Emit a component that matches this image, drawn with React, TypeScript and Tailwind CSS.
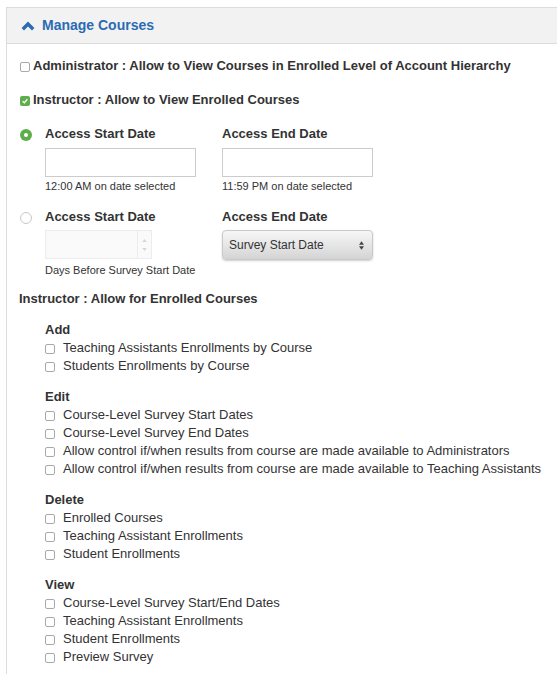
import { useState } from 'react'

const sections = [
  { title: 'Add', items: ['Teaching Assistants Enrollments by Course', 'Students Enrollments by Course'] },
  {
    title: 'Edit',
    items: [
      'Course-Level Survey Start Dates',
      'Course-Level Survey End Dates',
      'Allow control if/when results from course are made available to Administrators',
      'Allow control if/when results from course are made available to Teaching Assistants',
    ],
  },
  { title: 'Delete', items: ['Enrolled Courses', 'Teaching Assistant Enrollments', 'Student Enrollments'] },
  {
    title: 'View',
    items: ['Course-Level Survey Start/End Dates', 'Teaching Assistant Enrollments', 'Student Enrollments', 'Preview Survey'],
  },
]

function Box({ checked = false }: { checked?: boolean }) {
  if (checked) {
    return (
      <span className="flex h-[10px] w-[10px] shrink-0 items-center justify-center rounded-[2px] bg-[#5fae4c]">
        <svg viewBox="0 0 10 10" className="h-[8px] w-[8px]">
          <path d="M2 5.2 L4.2 7.2 L8 2.8" fill="none" stroke="#fff" strokeWidth="1.6" />
        </svg>
      </span>
    )
  }
  return <span className="block h-[10px] w-[10px] shrink-0 rounded-[2px] border border-[#a9a9a9] bg-white" />
}

function Radio({ checked = false }: { checked?: boolean }) {
  if (checked) {
    return (
      <span className="flex h-[12px] w-[12px] items-center justify-center rounded-full bg-[#5fae4c]">
        <span className="block h-[4px] w-[4px] rounded-full bg-white" />
      </span>
    )
  }
  return <span className="block h-[12px] w-[12px] rounded-full border border-[#c8c8c8] bg-white" />
}

export default function App() {
  const [mode] = useState(0)

  return (
    <div className="min-h-[674px] bg-white pl-[6px] pt-[7px] font-['Liberation_Sans',Arial,sans-serif] text-[#333]">
      <div className="min-h-[667px] border-l border-t border-[#dcdcdc]">
        {/* header */}
        <div className="flex h-[36px] items-center gap-[7px] border-b border-[#dcdcdc] bg-[#f2f2f2] pl-[14px]">
          <svg viewBox="0 0 14 10" className="h-[10px] w-[14px]">
            <path d="M1.8 8.2 L7 3 L12.2 8.2" fill="none" stroke="#2a6bb3" strokeWidth="3.4" />
          </svg>
          <span className="text-[14px] font-bold text-[#2a6bb3]">Manage Courses</span>
        </div>

        <div className="pl-[12px] pt-[13px]">
          <label className="flex h-[18px] items-center gap-[3px] text-[13px] font-bold leading-[18px]">
            <span className="ml-[1px] flex pt-[2px]"><Box /></span>
            Administrator : Allow to View Courses in Enrolled Level of Account Hierarchy
          </label>
          <label className="mt-[16px] flex h-[18px] items-center gap-[3px] text-[13px] font-bold leading-[18px]">
            <span className="ml-[1px] flex pt-[2px]"><Box checked /></span>
            Instructor : Allow to View Enrolled Courses
          </label>

          {/* date range: fixed */}
          <div className="mt-[16px] flex">
            <div className="flex h-[18px] w-[26px] items-center pl-[1px] pt-[2px]">
              <Radio checked={mode === 0} />
            </div>
            <div className="grid grid-cols-[151px_151px] gap-x-[26px]">
              <div>
                <div className="text-[13px] font-bold leading-[18px]">Access Start Date</div>
                <div className="mt-[5px] h-[29px] border border-[#ccc] bg-white" />
                <div className="mt-[2px] text-[11px] leading-[14px]">12:00 AM on date selected</div>
              </div>
              <div>
                <div className="text-[13px] font-bold leading-[18px]">Access End Date</div>
                <div className="mt-[5px] h-[29px] border border-[#ccc] bg-white" />
                <div className="mt-[2px] text-[11px] leading-[14px]">11:59 PM on date selected</div>
              </div>
            </div>
          </div>

          {/* date range: relative */}
          <div className="mt-[15px] flex">
            <div className="flex h-[18px] w-[26px] items-center pl-[1px] pt-[2px]">
              <Radio checked={mode === 1} />
            </div>
            <div className="grid grid-cols-[151px_151px] gap-x-[26px]">
              <div>
                <div className="text-[13px] font-bold leading-[18px]">Access Start Date</div>
                <div className="mt-[4px] flex h-[29px] w-[107px] border border-[#ececec] bg-[#fafafa]">
                  <div className="flex-1" />
                  <div className="flex w-[14px] flex-col items-center justify-center gap-[6px] border-l border-[#ececec]">
                    <svg viewBox="0 0 6 4" className="h-[3px] w-[5px]"><path d="M0 4 L3 0 L6 4Z" fill="#d6d6d6" /></svg>
                    <svg viewBox="0 0 6 4" className="h-[3px] w-[5px]"><path d="M0 0 L3 4 L6 0Z" fill="#d6d6d6" /></svg>
                  </div>
                </div>
                <div className="mt-[4px] whitespace-nowrap text-[11px] leading-[14px]">Days Before Survey Start Date</div>
              </div>
              <div>
                <div className="text-[13px] font-bold leading-[18px]">Access End Date</div>
                <div className="mt-[4px] flex h-[30px] items-center justify-between rounded-[4px] border border-[#c9c9c9] bg-gradient-to-b from-[#f6f6f6] via-[#e6e6e6] to-[#d4d4d4] pl-[6px] pr-[8px] text-[12px] text-[#333] shadow-[0_1px_2px_rgba(0,0,0,0.2)]">
                  Survey Start Date
                  <svg viewBox="0 0 6 10" className="h-[9px] w-[5px]">
                    <path d="M0 4 L3 0 L6 4Z M0 6 L3 10 L6 6Z" fill="#444" />
                  </svg>
                </div>
              </div>
            </div>
          </div>

          <div className="mt-[13px] text-[13px] font-bold leading-[18px]">Instructor : Allow for Enrolled Courses</div>

          <div className="pl-[26px]">
            {sections.map((s) => (
              <div key={s.title} className="mt-[13px]">
                <div className="text-[13px] font-bold leading-[18px]">{s.title}</div>
                {s.items.map((item) => (
                  <label key={item} className="flex h-[18px] items-center gap-[8px] whitespace-nowrap text-[13px] leading-[18px]">
                    <span className="flex pt-[2px]"><Box /></span>
                    {item}
                  </label>
                ))}
              </div>
            ))}
          </div>
        </div>
      </div>
    </div>
  )
}
